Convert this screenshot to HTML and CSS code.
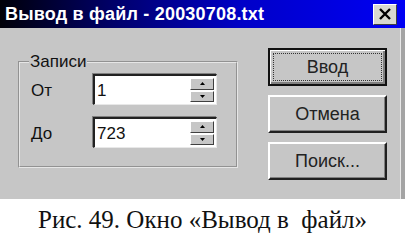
FILE: index.html
```html
<!DOCTYPE html>
<html lang="ru">
<head>
<meta charset="utf-8">
<link rel="stylesheet" href="styles.css">
</head>
<body>
<div class="window">
  <div class="titlebar">
    <span class="title">Вывод в файл - 20030708.txt</span>
    <span class="close"><svg width="14" height="12" viewBox="0 0 14 12"><path d="M2 1 L12 11 M12 1 L2 11" stroke="#000" stroke-width="2.4"/></svg></span>
  </div>
  <div class="body">
    <fieldset class="group">
      <legend>Записи</legend>
      <div class="row">
        <span class="lbl">От</span>
        <div class="spin">
          <span class="val">1</span>
          <div class="arrows">
            <span class="arr"><svg width="5" height="3" viewBox="0 0 5 3"><path d="M0 3 L2.5 0 L5 3Z" fill="#000"/></svg></span>
            <span class="arr"><svg width="5" height="3" viewBox="0 0 5 3"><path d="M0 0 L2.5 3 L5 0Z" fill="#000"/></svg></span>
          </div>
        </div>
      </div>
      <div class="row">
        <span class="lbl">До</span>
        <div class="spin">
          <span class="val">723</span>
          <div class="arrows">
            <span class="arr"><svg width="5" height="3" viewBox="0 0 5 3"><path d="M0 3 L2.5 0 L5 3Z" fill="#000"/></svg></span>
            <span class="arr"><svg width="5" height="3" viewBox="0 0 5 3"><path d="M0 0 L2.5 3 L5 0Z" fill="#000"/></svg></span>
          </div>
        </div>
      </div>
    </fieldset>
    <div class="buttons">
      <div class="btn default"><span class="focus">Ввод</span></div>
      <div class="btn"><span class="focus plain">Отмена</span></div>
      <div class="btn"><span class="focus plain">Поиск...</span></div>
    </div>
  </div>
</div>
<p class="caption">Рис. 49. Окно «Вывод в  файл»</p>
</body>
</html>
```

FILE: styles.css
```css
html, body {
  margin: 0;
  padding: 0;
  background: #fff;
}
body {
  width: 405px;
  height: 245px;
  overflow: hidden;
  font-family: "Liberation Sans", Arial, sans-serif;
}
.window {
  width: 405px;
  height: 199px;
  display: flex;
  flex-direction: column;
  background: #c6c6c6;
}
.titlebar {
  height: 28px;
  flex: none;
  display: flex;
  align-items: center;
  justify-content: space-between;
  padding: 0 8px 0 5px;
  box-sizing: border-box;
  background: linear-gradient(90deg, #000008 0%, #000070 30%, #0000c8 60%, #0000f4 100%);
}
.title {
  color: #fff;
  font-weight: bold;
  font-size: 18px;
  letter-spacing: 0.2px;
}
.close {
  width: 24px;
  height: 21px;
  box-sizing: border-box;
  display: flex;
  align-items: center;
  justify-content: center;
  background: #d8d8d0;
  border-top: 1px solid #fff;
  border-left: 1px solid #fff;
  border-right: 1px solid #404040;
  border-bottom: 1px solid #404040;
}
.body {
  flex: 1;
  display: flex;
  align-items: flex-start;
  padding: 20px 0 0 18px;
  border-right: 4px solid #a4a4a4;
  box-shadow: inset -1px 0 0 #e8e8e8;
}
.group {
  margin: 7px 0 0 0;
  width: 220px;
  height: 113px;
  box-sizing: border-box;
  padding: 5px 0 0 11px;
  border: 2px groove #e6e6e6;
  display: flex;
  flex-direction: column;
  gap: 12px;
}
.group legend {
  font-size: 17px;
  color: #111;
  padding: 0 1px;
  margin-left: -2px;
  line-height: 14px;
}
.row {
  display: flex;
  align-items: center;
}
.lbl {
  width: 62px;
  font-size: 17px;
  color: #111;
  padding-top: 3px;
}
.spin {
  width: 124px;
  height: 31px;
  box-sizing: border-box;
  background: #fff;
  border-top: 2px solid #222;
  border-left: 2px solid #222;
  border-right: 1px solid #e8e8e8;
  border-bottom: 1px solid #e8e8e8;
  box-shadow: -1px -1px 0 #808080;
  display: flex;
  align-items: stretch;
}
.val {
  flex: 1;
  font-size: 17px;
  color: #111;
  padding: 5px 0 0 2px;
}
.arrows {
  width: 24px;
  display: flex;
  flex-direction: column;
  padding: 2px 2px 2px 0;
  gap: 1px;
}
.arr {
  flex: 1;
  display: flex;
  align-items: center;
  justify-content: center;
  background: #c6c6c6;
  border-top: 1px solid #fff;
  border-left: 1px solid #fff;
  border-right: 1px solid #404040;
  border-bottom: 1px solid #404040;
}
.buttons {
  margin-left: 30px;
  display: flex;
  flex-direction: column;
  gap: 9px;
}
.btn {
  width: 119px;
  height: 38px;
  box-sizing: border-box;
  background: #c6c6c6;
  border-top: 2px solid #fff;
  border-left: 2px solid #fff;
  border-right: 2px solid #202020;
  border-bottom: 2px solid #202020;
  box-shadow: inset -1px -1px 0 #808080;
  display: flex;
  padding: 3px;
}
.btn.default {
  border: 2px solid #111;
  box-shadow: inset 1px 1px 0 #fff, inset -2px -2px 0 #808080;
}
.focus {
  flex: 1;
  display: flex;
  align-items: center;
  justify-content: center;
  font-size: 18px;
  color: #222;
  border: 1px dotted #333;
}
.focus.plain {
  border-color: transparent;
}
.caption {
  margin: 7px 0 0 0;
  text-align: center;
  white-space: pre;
  font-family: "Liberation Serif", "Times New Roman", serif;
  font-size: 25px;
  color: #111;
}
```
